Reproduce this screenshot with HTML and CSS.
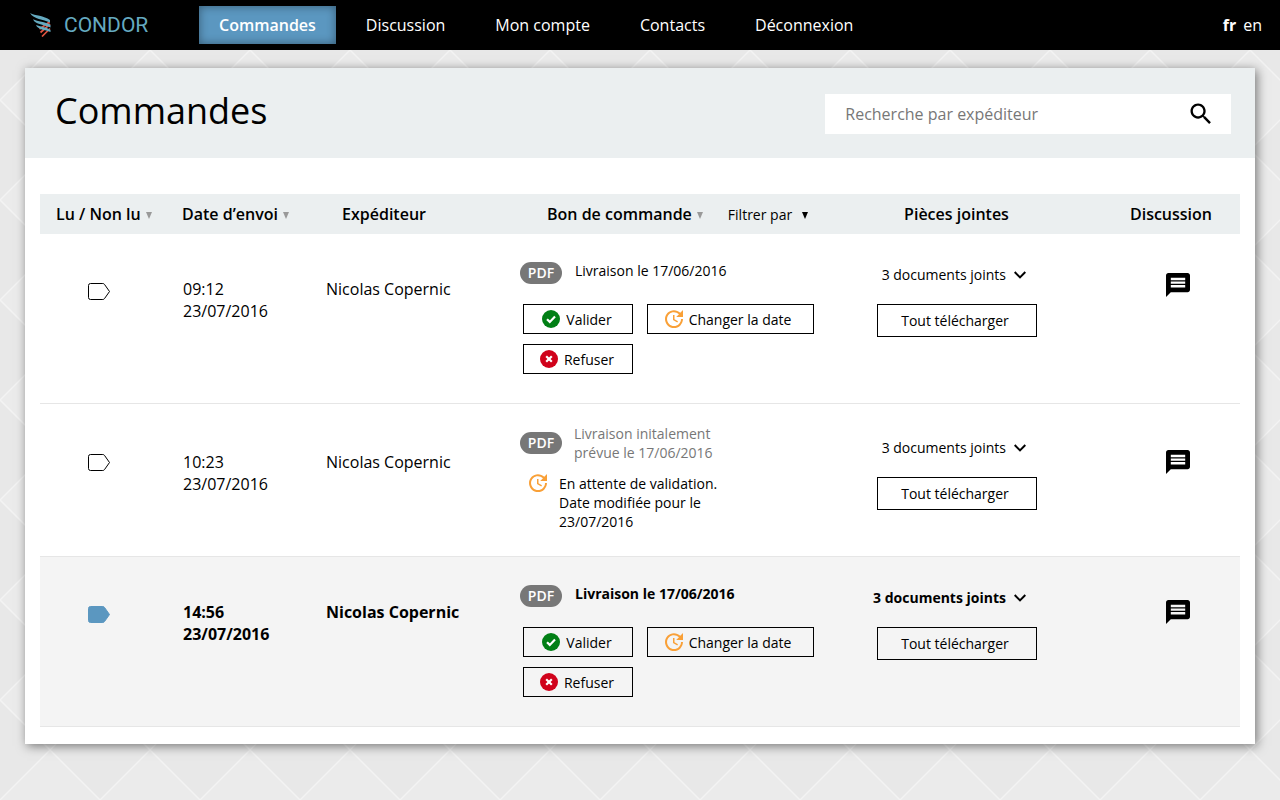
FILE: index.html
```html
<!DOCTYPE html>
<html lang="fr">
<head>
<meta charset="utf-8">
<meta name="viewport" content="width=device-width, initial-scale=1">
<title>Condor – Commandes</title>
<link rel="stylesheet" href="styles.css">
</head>
<body>
<svg class="sprite" aria-hidden="true">
  <symbol id="sort" viewBox="0 0 6 7"><path d="M0 0h6L3 7z"/></symbol>
  <symbol id="tag" viewBox="0 0 22 17"><path d="M2.500.5h12.300c.7 0 1.300.3 1.700.9l5 7.100-5 7.100c-.4.6-1 .9-1.700.9H2.500a2 2 0 0 1-2-2v-12a2 2 0 0 1 2-2z"/></symbol>
  <symbol id="chevron" viewBox="6 8.590 12 7.410"><path d="M16.590 8.590 12 13.170 7.410 8.590 6 10l6 6 6-6z"/></symbol>
  <symbol id="chat" viewBox="2 2 20 20"><path d="M20 2H4c-1.100 0-1.990.9-1.990 2L2 22l4-4h14c1.100 0 2-.9 2-2V4c0-1.100-.9-2-2-2zm-2 12H6v-2h12v2zm0-3H6V9h12v2zm0-3H6V6h12v2z"/></symbol>
  <symbol id="update" viewBox="3 3 18 18"><path d="M21 10.120h-6.780l2.740-2.820c-2.730-2.700-7.150-2.800-9.880-.1-2.730 2.710-2.730 7.080 0 9.790s7.150 2.710 9.880 0C18.320 15.650 19 14.080 19 12.100h2c0 1.980-.88 4.550-2.640 6.290-3.510 3.480-9.210 3.480-12.720 0-3.500-3.470-3.530-9.110-.02-12.580s9.140-3.470 12.650 0L21 3v7.120zM12.500 8v4.250l3.500 2.080-.72 1.210L11 13V8h1.500z"/></symbol>
  <symbol id="check" viewBox="0 0 18 18"><circle cx="9" cy="9" r="9" fill="#017f15"/><path d="M5 9.200l2.800 2.700L13 6.600" fill="none" stroke="#fff" stroke-width="2.200"/></symbol>
  <symbol id="cross" viewBox="0 0 18 18"><circle cx="9" cy="9" r="9" fill="#d0021b"/><path d="M6.200 6.200l5.600 5.600M11.800 6.200l-5.600 5.600" fill="none" stroke="#fff" stroke-width="2.200"/></symbol>
</svg>

<header class="topbar">
  <a class="brand" href="#">
    <svg class="brand-mark" viewBox="0 0 21 24" aria-hidden="true">
      <path d="M12 23.500l8-8M10.500 19.500L20 11M9.500 16l10-7" fill="none" stroke="#e0523f" stroke-width="1.700"/>
      <path d="M0 0c5 2.800 14 2.500 20 7v2.600C13 6 4 6.500 0 0zM3 6.200c5 2.600 12 2 17.500 5.800v2.500C14 11.300 5.500 12 3 6.200zM6 12c4 1.800 10 1.700 14.500 5v2C15 16.500 8 17 6 12z" fill="#65aac0"/>
    </svg>
    <span>CONDOR</span>
  </a>
  <nav class="nav">
    <a class="nav-link is-active" href="#">Commandes</a>
    <a class="nav-link" href="#">Discussion</a>
    <a class="nav-link" href="#">Mon compte</a>
    <a class="nav-link" href="#">Contacts</a>
    <a class="nav-link" href="#">Déconnexion</a>
  </nav>
  <div class="langs"><a class="is-current" href="#">fr</a><a href="#">en</a></div>
</header>

<main class="card">
  <div class="card-head">
    <h1>Commandes</h1>
    <form class="search">
      <input type="text" placeholder="Recherche par expéditeur" aria-label="Recherche par expéditeur">
      <button type="button" aria-label="Rechercher"><svg viewBox="0 0 24 24"><path d="M15.500 14h-.79l-.28-.27C15.410 12.590 16 11.110 16 9.500 16 5.910 13.090 3 9.500 3S3 5.910 3 9.500 5.910 16 9.500 16c1.610 0 3.090-.59 4.230-1.570l.27.28v.79l5 4.990L20.490 19l-4.990-5zm-6 0C7.010 14 5 11.990 5 9.500S7.010 5 9.500 5 14 7.010 14 9.500 11.990 14 9.500 14z"/></svg></button>
    </form>
  </div>

  <table class="orders">
    <colgroup><col class="w-read"><col class="w-date"><col class="w-sender"><col class="w-order"><col class="w-files"><col class="w-chat"></colgroup>
    <thead>
      <tr>
        <th class="c-read"><button class="sort" type="button">Lu / Non lu <svg><use href="#sort"/></svg></button></th>
        <th class="c-date"><button class="sort" type="button">Date d’envoi <svg><use href="#sort"/></svg></button></th>
        <th class="c-sender">Expéditeur</th>
        <th class="c-order">
          <div class="order-head">
            <button class="sort" type="button">Bon de commande <svg><use href="#sort"/></svg></button>
            <div class="filter"><select aria-label="Filtrer par"><option>Filtrer par</option></select><svg aria-hidden="true"><use href="#sort"/></svg></div>
          </div>
        </th>
        <th class="c-files">Pièces jointes</th>
        <th class="c-chat">Discussion</th>
      </tr>
    </thead>
    <tbody>
      <tr>
        <td class="c-read"><svg class="tag" role="img" aria-label="Lu"><use href="#tag"/></svg></td>
        <td class="c-date">09:12<br>23/07/2016</td>
        <td class="c-sender">Nicolas Copernic</td>
        <td class="c-order">
          <div class="delivery"><a class="pdf" href="#">PDF</a><span>Livraison le 17/06/2016</span></div>
          <div class="actions">
            <button class="btn" type="button"><svg><use href="#check"/></svg>Valider</button>
            <button class="btn btn-wide" type="button"><svg class="update"><use href="#update"/></svg>Changer la date</button>
            <button class="btn" type="button"><svg><use href="#cross"/></svg>Refuser</button>
          </div>
        </td>
        <td class="c-files">
          <div class="files"><button class="toggle" type="button">3 documents joints <svg><use href="#chevron"/></svg></button><button class="btn btn-download" type="button">Tout télécharger</button></div>
        </td>
        <td class="c-chat"><a href="#" aria-label="Discussion"><svg class="chat"><use href="#chat"/></svg></a></td>
      </tr>
      <tr class="is-pending">
        <td class="c-read"><svg class="tag" role="img" aria-label="Lu"><use href="#tag"/></svg></td>
        <td class="c-date">10:23<br>23/07/2016</td>
        <td class="c-sender">Nicolas Copernic</td>
        <td class="c-order">
          <div class="delivery"><a class="pdf" href="#">PDF</a><span>Livraison initalement<br>prévue le 17/06/2016</span></div>
          <div class="waiting"><svg class="update"><use href="#update"/></svg><p>En attente de validation.<br>Date modifiée pour le<br>23/07/2016</p></div>
        </td>
        <td class="c-files">
          <div class="files"><button class="toggle" type="button">3 documents joints <svg><use href="#chevron"/></svg></button><button class="btn btn-download" type="button">Tout télécharger</button></div>
        </td>
        <td class="c-chat"><a href="#" aria-label="Discussion"><svg class="chat"><use href="#chat"/></svg></a></td>
      </tr>
      <tr class="is-unread">
        <td class="c-read"><svg class="tag" role="img" aria-label="Non lu"><use href="#tag"/></svg></td>
        <td class="c-date">14:56<br>23/07/2016</td>
        <td class="c-sender">Nicolas Copernic</td>
        <td class="c-order">
          <div class="delivery"><a class="pdf" href="#">PDF</a><span>Livraison le 17/06/2016</span></div>
          <div class="actions">
            <button class="btn" type="button"><svg><use href="#check"/></svg>Valider</button>
            <button class="btn btn-wide" type="button"><svg class="update"><use href="#update"/></svg>Changer la date</button>
            <button class="btn" type="button"><svg><use href="#cross"/></svg>Refuser</button>
          </div>
        </td>
        <td class="c-files">
          <div class="files"><button class="toggle" type="button">3 documents joints <svg><use href="#chevron"/></svg></button><button class="btn btn-download" type="button">Tout télécharger</button></div>
        </td>
        <td class="c-chat"><a href="#" aria-label="Discussion"><svg class="chat"><use href="#chat"/></svg></a></td>
      </tr>
    </tbody>
  </table>
</main>
</body>
</html>
```
FILE: styles.css
```css
* { box-sizing: border-box; }

body {
  margin: 0;
  min-height: 100vh;
  font: 16px/22px "Open Sans", "Noto Sans", sans-serif;
  color: #000;
  background:
    linear-gradient(45deg, transparent 49%, #f3f3f3 50%, transparent 51%) 0 0 / 100px 100px,
    linear-gradient(135deg, transparent 49%, #f3f3f3 50%, transparent 51%) 0 0 / 100px 100px,
    conic-gradient(from 45deg, #e8e8e8 25%, #ebebeb 0 50%, #e8e8e8 0 75%, #ebebeb 0) 0 0 / 100px 100px;
}

button, input, select { font: inherit; color: inherit; border: 0; padding: 0; background: none; border-radius: 0; }
button { cursor: pointer; }
a { color: inherit; text-decoration: none; }
svg { display: block; flex: none; }
.sprite { position: absolute; width: 0; height: 0; }

/* Top bar */
.topbar { display: flex; align-items: center; min-height: 50px; padding: 0 18px 0 30px; background: #000; color: #fff; }
.brand { display: flex; align-items: center; gap: 13px; width: 169px; color: #65aac0; font: 400 21px/24px Roboto, sans-serif; }
.brand-mark { width: 21px; height: 24px; }
.nav { display: flex; gap: 10px; flex: 1; }
.nav-link { padding: 8px 20px; }
.nav-link.is-active { background: #5b97c0; font-weight: 600; box-shadow: inset 0 0 10px rgba(0, 0, 0, .4); }
.langs { display: flex; gap: 7px; }
.is-current { font-weight: 700; }

/* Card */
.card { margin: 18px 25px 56px; padding-bottom: 17px; background: #fff; box-shadow: 2px 2px 10px rgba(0, 0, 0, .5); }
.card-head { display: flex; align-items: center; justify-content: space-between; min-height: 90px; padding: 2px 24px 0 30px; background: #ebeff0; }
h1 { margin: 0; padding-bottom: 6px; font-size: 36px; line-height: 44px; font-weight: 400; }
.search { display: flex; align-items: center; width: 34.5%; height: 40px; padding: 0 16px 0 20px; background: #fff; }
.search input { flex: 1; min-width: 0; outline: 0; }
.search input::placeholder { color: #777; opacity: 1; }
.search svg { width: 28px; height: 28px; }

/* Orders table */
.orders { width: calc(100% - 30px); margin: 36px 15px 0; table-layout: fixed; border-collapse: separate; border-spacing: 0; }
.w-read { width: 10.5%; }
.w-date { width: 12%; }
.w-sender { width: 16%; }
.w-order { width: 29.5%; }
.w-files { width: 17%; }
.w-chat { width: 15%; }

th { height: 40px; padding: 0; background: #ebeff0; font-weight: 600; text-align: left; }
th.c-read { padding-left: 16px; }
th.c-date { padding-left: 16px; }
th.c-sender { padding-left: 32px; }
th.c-order { padding-left: 45px; }
th.c-files { padding-right: 3px; text-align: center; }
th.c-chat { padding-right: 28px; text-align: right; }
.sort { display: flex; align-items: center; gap: 5px; white-space: nowrap; }
.sort svg { width: 6px; height: 7px; margin-top: 3px; fill: #999; }
.order-head { display: flex; align-items: center; gap: 25px; }
.filter { display: grid; align-items: center; padding-top: 2px; font-size: 14px; font-weight: 400; }
.filter select { grid-area: 1 / 1; appearance: none; padding-right: 15px; }
.filter svg { grid-area: 1 / 1; justify-self: end; width: 6px; height: 7px; pointer-events: none; }

td { padding: 44px 0 0; vertical-align: top; border-bottom: 1px solid #e6e6e6; }
td.c-read { padding: 49px 0 0 48px; }
td.c-date { padding-left: 17px; }
td.c-sender { padding-left: 16px; }
td.c-order { padding: 28px 0 29px 18px; font-size: 14px; line-height: 19px; }
td.c-files { padding-top: 30px; padding-right: 2px; font-size: 14px; }
td.c-chat { padding: 39px 50px 0 0; }
td.c-chat a { display: flex; justify-content: flex-end; }

.tag { width: 22px; height: 17px; fill: none; stroke: #000; }
.chat { width: 24px; height: 24px; }
.delivery { display: flex; gap: 13px; line-height: 18px; }
.pdf { width: 42px; height: 22px; border-radius: 11px; background: #777; color: #fff; font-weight: 600; line-height: 22px; text-align: center; }
.actions { display: flex; flex-wrap: wrap; gap: 10px 14px; padding: 20px 0 0 3px; }
.btn { display: flex; align-items: center; justify-content: center; gap: 6px; width: 110px; height: 30px; padding-right: 2px; border: 1px solid #000; background: #fff; font-size: 14px; }
.btn svg { width: 18px; height: 18px; }
.btn-wide { width: 167px; padding-right: 5px; }
.update { width: 18px; height: 18px; fill: #f9a037; }
.files { width: 160px; margin: 0 auto; }
.toggle { display: flex; align-items: center; justify-content: flex-end; gap: 8px; width: 100%; padding-right: 11px; white-space: nowrap; }
.toggle svg { width: 12px; height: 8px; }
.btn-download { width: 100%; height: 33px; margin-top: 18px; padding-right: 4px; }

.is-pending td { padding-top: 47px; }
.is-pending td.c-read { padding-top: 50px; }
.is-pending td.c-order { padding: 20px 0 25px 18px; }
.is-pending td.c-files { padding-top: 33px; }
.is-pending td.c-chat { padding-top: 46px; }
.is-pending .delivery { align-items: center; gap: 12px; color: #777; line-height: 19px; }
.waiting { display: flex; gap: 12px; padding: 12px 0 0 9px; }
.waiting p { margin: 0; }

.is-unread td { background: #f4f4f4; font-weight: 700; }
.is-unread td.c-chat { padding-top: 43px; }
.is-unread .tag { fill: #5b97c0; stroke: #5b97c0; }
.is-unread .pdf { font-weight: 600; }
.is-unread .btn { background: none; font-weight: 400; }
```
